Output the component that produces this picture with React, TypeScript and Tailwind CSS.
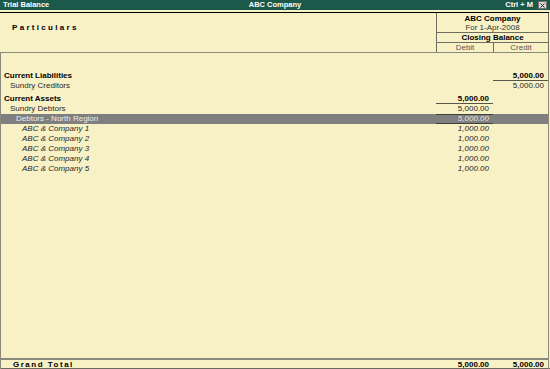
import React from 'react';

const rows = [
	{ id: 'cl', label: 'Current Liabilities', kind: 'group', credit: '5,000.00' },
	{ id: 'sc', label: 'Sundry Creditors', kind: 'sub', creditPlain: '5,000.00' },
	{ id: 'gap', kind: 'gap' },
	{ id: 'ca', label: 'Current Assets', kind: 'group', debit: '5,000.00' },
	{ id: 'sd', label: 'Sundry Debtors', kind: 'sub', debitPlain: '5,000.00' },
	{ id: 'dn', label: 'Debtors - North Region', kind: 'active', debitPlain: '5,000.00' },
	{ id: 'a1', label: 'ABC & Company 1', kind: 'ledger', debitPlain: '1,000.00' },
	{ id: 'a2', label: 'ABC & Company 2', kind: 'ledger', debitPlain: '1,000.00' },
	{ id: 'a3', label: 'ABC & Company 3', kind: 'ledger', debitPlain: '1,000.00' },
	{ id: 'a4', label: 'ABC & Company 4', kind: 'ledger', debitPlain: '1,000.00' },
	{ id: 'a5', label: 'ABC & Company 5', kind: 'ledger', debitPlain: '1,000.00' },
];

const TitleBar = () => (
	<div className="h-[10px] bg-[#1b5a4b] text-white font-bold text-[7.5px] leading-[10px] flex items-center relative">
		<span className="pl-[3px]">Trial Balance</span>
		<span className="absolute left-1/2 -translate-x-1/2">ABC Company</span>
		<span className="ml-auto pr-[5px]">Ctrl + M</span>
		<span className="w-[9px] h-[8px] mr-[3px] bg-[#d8d8d0] border border-[#707070] flex items-center justify-center">
			<svg width="5" height="5" viewBox="0 0 5 5">
				<path d="M0.5 0.5 L4.5 4.5 M4.5 0.5 L0.5 4.5" stroke="#303030" strokeWidth="1" />
			</svg>
		</span>
	</div>
);

const Header = () => (
	<div className="h-[41px] border-t border-black border-b border-b-[#8a8a7c] flex">
		<div className="flex-1 pl-[12px] pt-[9px]">
			<span className="font-bold text-[8px] tracking-[2.3px] text-black">Particulars</span>
		</div>
		<div className="w-[113px] border-l border-r border-[#6e6e60] flex flex-col text-center">
			<div className="h-[20px] border-b border-[#6e6e60] flex flex-col justify-center">
				<div className="font-bold text-black leading-[9px]">ABC Company</div>
				<div className="text-[#333] leading-[9px]">For 1-Apr-2008</div>
			</div>
			<div className="h-[10px] border-b border-[#6e6e60] font-bold text-black leading-[9px]">Closing Balance</div>
			<div className="flex-1 flex text-[#555] leading-[9px]">
				<div className="w-[57px] border-r border-[#6e6e60]">Debit</div>
				<div className="flex-1">Credit</div>
			</div>
		</div>
	</div>
);

const Row = ({ row }) => {
	if (row.kind === 'gap') return <div className="h-[3px]" />;

	const active = row.kind === 'active';
	const labelClass =
		row.kind === 'group'
			? 'pl-[3px] font-bold text-black'
			: row.kind === 'sub'
			? 'pl-[9px] text-[#262626]'
			: row.kind === 'active'
			? 'pl-[15px] text-[#ececec]'
			: 'pl-[21px] italic text-[#262626]';

	return (
		<div className={`h-[10px] flex leading-[10px] ${active ? 'bg-[#7f7f7f]' : ''}`}>
			<div className={`flex-1 ${labelClass}`}>{row.label}</div>
			<div
				className={`w-[57px] text-right pr-[4px] ${
					row.debit ? 'font-bold text-black border-b border-[#55554a] leading-[9px]' : ''
				} ${active ? 'italic text-[#e4e4e4] border-t border-b border-[#404038] leading-[8px]' : ''} ${
					row.kind === 'ledger' ? 'italic text-[#262626]' : ''
				} ${row.kind === 'sub' ? 'text-[#262626]' : ''}`}
			>
				{row.debit || row.debitPlain || ''}
			</div>
			<div
				className={`w-[55px] text-right pr-[4px] ${
					row.credit ? 'font-bold text-black border-b border-[#55554a] leading-[9px]' : 'text-[#262626]'
				}`}
			>
				{row.credit || row.creditPlain || ''}
			</div>
		</div>
	);
};

export default function App() {
	return (
		<div className="w-[550px] h-[369px] bg-[#f8f1c6] overflow-hidden font-['Liberation_Sans',Arial,sans-serif] text-[8px]">
			<TitleBar />
			<div className="h-[2px]" />
			<div className="w-[549px] h-[357px] flex flex-col">
				<Header />
				<div className="flex-1 border-l border-r border-[#8a8a7c] flex flex-col">
					<div className="h-[18px]" />
					{rows.map((row) => (
						<Row key={row.id} row={row} />
					))}
				</div>
				<div className="h-[11px] border-t-2 border-[#8a8a7c] border-l border-r flex font-bold text-black leading-[9px]">
					<div className="flex-1 pl-[12px] tracking-[1.5px]">Grand Total</div>
					<div className="w-[57px] text-right pr-[4px]">5,000.00</div>
					<div className="w-[55px] text-right pr-[4px]">5,000.00</div>
				</div>
			</div>
			<div className="h-[3px] bg-[#6b6b5e] -mt-[1px]" />
		</div>
	);
}
